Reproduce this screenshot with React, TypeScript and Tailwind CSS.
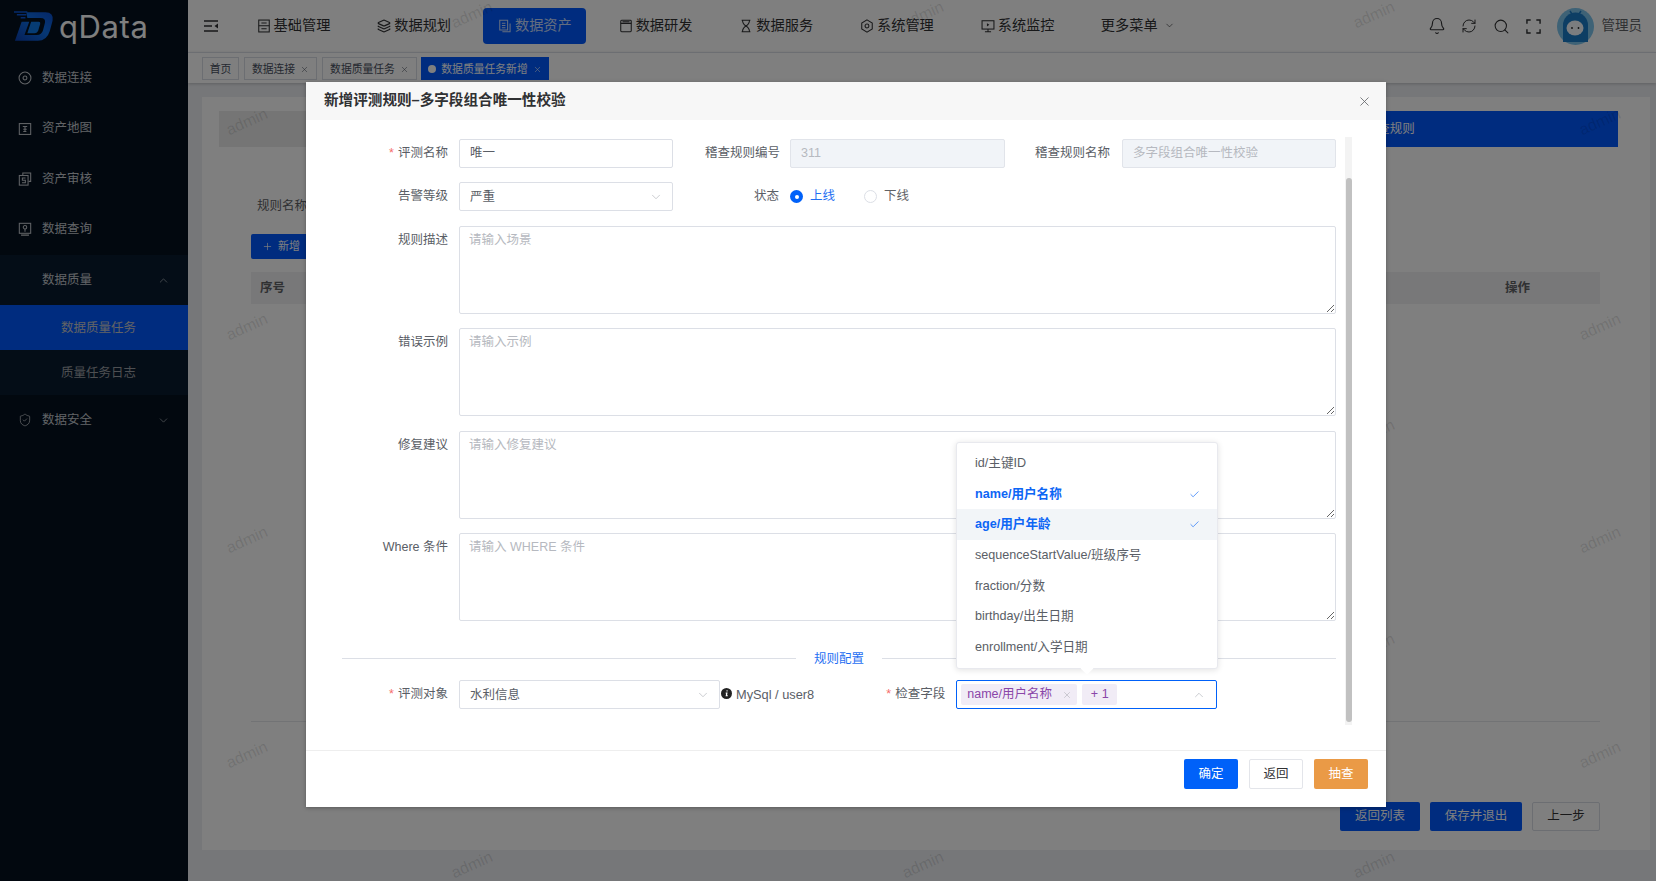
import React from "react";
import { X, ChevronDown, ChevronUp, Check, Plus, Layers, Bell, RefreshCw, Search, ShieldCheck } from "lucide-react";

const FONT = "font-['Liberation_Sans','Noto_Sans_CJK_SC',sans-serif]";

function Ic({ children, className = "" }: { children: React.ReactNode; className?: string }) {
  return (
    <svg viewBox="0 0 16 16" fill="none" stroke="currentColor" strokeWidth="1.2" className={className}>
      {children}
    </svg>
  );
}

const sideIcons: Record<string, React.ReactNode> = {
  conn: (<Ic className="w-[14px] h-[14px]"><circle cx="8" cy="8" r="6.8" /><circle cx="8" cy="8" r="2.2" /></Ic>),
  map: (<Ic className="w-[14px] h-[14px]"><rect x="1.5" y="1.8" width="13" height="12.4" /><path d="M5.5 5.2h5M8 5v6M6 8.2h4M6 10.8h3.6" /></Ic>),
  audit: (<Ic className="w-[14px] h-[14px]"><path d="M5.5 3.5V1.2h9v9.5h-2.5" /><rect x="1.5" y="4" width="10" height="11" /><path d="M8.6 6.8H5v2.6h3.4v2.8H4.6" /></Ic>),
  query: (<Ic className="w-[14px] h-[14px]"><rect x="1.5" y="1.5" width="13" height="11.4" /><circle cx="8" cy="6" r="2" /><path d="M8 8v3M3.5 15h9" /></Ic>),
};

const navIcons: React.ReactNode[] = [
  <Ic className="w-[14px] h-[14px]" key="a"><rect x="2" y="1.2" width="12" height="13.6" /><path d="M2 7.8h12M5 4.5h6M5 11.2h6" /></Ic>,
  <Layers className="w-[14px] h-[14px]" strokeWidth={2} key="b" />,
  <Ic className="w-[14px] h-[14px]" key="c"><path d="M2 1.5h9v11H2zM13.8 5v9.5H5" /><path d="M4.5 4.8h4M4.5 7.5h4M4.5 10h4" /></Ic>,
  <Ic className="w-[14px] h-[14px]" key="d"><rect x="2" y="1.5" width="12" height="13" rx="1" /><path d="M2 5h12M4 3.2h8" /></Ic>,
  <Ic className="w-[14px] h-[14px]" key="e"><path d="M3 1.5h10M3 14.5h10M4 1.5c0 3.5 1.5 5 4 6.5 2.5-1.5 4-3 4-6.5M4 14.5c0-3.5 1.5-5 4-6.5 2.5 1.5 4 3 4 6.5" /></Ic>,
  <Ic className="w-[14px] h-[14px]" key="f"><path d="M8 1l6 3.5v7L8 15l-6-3.5v-7z" /><circle cx="8" cy="8" r="2.2" /></Ic>,
  <Ic className="w-[14px] h-[14px]" key="g"><rect x="1.2" y="2" width="13.6" height="9.5" /><path d="M8 11.5v3M4.5 14.5h7" /><path d="M6.8 4.8l2.8 1.9-2.8 1.9z" fill="currentColor" stroke="none" /></Ic>,
];

const navItems = ["基础管理", "数据规划", "数据资产", "数据研发", "数据服务", "系统管理", "系统监控"];

const marks: [number, number][] = [
  [472, 15], [923, 15], [1374, 15],
  [247, 122], [1600, 122],
  [247, 327], [1600, 327], [1374, 433],
  [247, 540], [1600, 540], [1374, 647],
  [247, 755], [1600, 755],
  [472, 865], [923, 865], [1374, 865],
];

function SideItem({ icon, label, chevron, className = "" }: { icon?: string; label: string; chevron?: "up" | "down"; className?: string }) {
  return (
    <div className={`relative flex h-[50.4px] items-center pl-[18px] text-[12.5px] text-[#c3c7cc] ${className}`}>
      <span className="flex w-[24px] shrink-0">{icon ? sideIcons[icon] : null}</span>
      <span>{label}</span>
      {chevron === "up" && <ChevronUp className="absolute right-[18px] w-[13px] h-[13px]" strokeWidth={1.2} />}
      {chevron === "down" && <ChevronDown className="absolute right-[18px] w-[13px] h-[13px]" strokeWidth={1.2} />}
    </div>
  );
}

function Tag({ label, closable, active, width }: { label: string; closable?: boolean; active?: boolean; width: string }) {
  return (
    <div className={`flex h-[23px] items-center justify-center gap-[5px] border pt-[1px] text-[10.8px] ${width} ${active ? "-ml-[1px] border-[#0058fe] bg-[#0058fe] text-white" : "border-[#d8dce5] bg-white text-[#495060]"}`}>
      {active && <span className="h-[8px] w-[8px] rounded-full bg-white" />}
      <span>{label}</span>
      {closable && <X className="h-[9px] w-[9px]" strokeWidth={1.4} />}
    </div>
  );
}

function Label({ children, required, className = "" }: { children: React.ReactNode; required?: boolean; className?: string }) {
  return (
    <div className={`shrink-0 text-right text-[12.5px] leading-[29px] text-[#5a5e66] ${className}`}>
      {required && <span className="mr-[4px] text-[#f56c6c]">*</span>}
      {children}
    </div>
  );
}

function SelectBox({ value, className = "" }: { value: string; className?: string }) {
  return (
    <div className={`flex h-[29px] items-center justify-between rounded-[2px] border border-[#dcdfe6] bg-white pl-[10px] pr-[9px] text-[12.5px] text-[#5a5e66] ${className}`}>
      <span className="pt-[1px]">{value}</span>
      <ChevronDown className="h-[14px] w-[14px] text-[#b4b7bd]" strokeWidth={1.2} />
    </div>
  );
}

function AreaRow({ label, placeholder, className = "" }: { label: string; placeholder: string; className?: string }) {
  return (
    <div className={`flex ${className}`}>
      <Label className="w-[106px]">{label}</Label>
      <textarea
        placeholder={placeholder}
        readOnly
        className="ml-[11px] h-[88px] flex-1 rounded-[2px] border border-[#dcdfe6] bg-white px-[9px] py-[4px] text-[12.5px] leading-[18px] outline-none placeholder:text-[#b6b9c0]"
      />
    </div>
  );
}

const options = [
  { t: "id/主键ID" },
  { t: "name/用户名称", on: true },
  { t: "age/用户年龄", on: true, hover: true },
  { t: "sequenceStartValue/班级序号" },
  { t: "fraction/分数" },
  { t: "birthday/出生日期" },
  { t: "enrollment/入学日期" },
];

export default function App() {
  return (
    <div className={`relative flex h-screen w-full overflow-hidden ${FONT}`}>
      <aside className="w-[188px] shrink-0 bg-[#04101f]">
        <div className="flex h-[53px] items-center pl-[14px]">
          <svg viewBox="0 0 42 32" className="h-[31px] w-[40px]">
            <defs>
              <linearGradient id="lg" x1="0" y1="1" x2="1" y2="0">
                <stop offset="0" stopColor="#0b3fb0" />
                <stop offset="0.55" stopColor="#0d6fe8" />
                <stop offset="1" stopColor="#0b4fd0" />
              </linearGradient>
            </defs>
            <path d="M0 0h14v1.5H0zM3 3h10v1.5H3zM7 6h5v1.5H7z" fill="#0a55d8" />
            <path d="M13 1H33Q42 1 40.5 10L37.5 21Q34.5 31 25 31H1L8 11H16L11 25H24Q29 25 30.5 20L32.5 12Q33.5 7 28 7H14z" fill="url(#lg)" />
            <path d="M18 11H26Q28 11 27.5 13.5L25.5 20Q24.5 23 21.5 23H14z" fill="#0d78e8" />
          </svg>
          <span className="ml-[5px] font-['Inter',sans-serif] text-[31px] leading-none tracking-[0.6px] text-white">qData</span>
        </div>
        <SideItem icon="conn" label="数据连接" />
        <SideItem icon="map" label="资产地图" />
        <SideItem icon="audit" label="资产审核" />
        <SideItem icon="query" label="数据查询" />
        <div className="bg-[#081a2e]">
          <SideItem label="数据质量" chevron="up" className="pt-[1px]" />
          <div className="flex h-[45px] items-center bg-[#0058fe] pl-[61px] pt-[2px] text-[12.5px] text-[#c3c7cc]">数据质量任务</div>
          <div className="flex h-[45px] items-center pl-[61px] pt-[2px] text-[12.5px] text-[#9a9ea4]">质量任务日志</div>
        </div>
        <div className="relative flex h-[50.4px] items-center pl-[18px] text-[12.5px] text-[#c3c7cc]">
          <ShieldCheck className="mr-[10px] h-[14px] w-[14px]" strokeWidth={1.3} />
          <span>数据安全</span>
          <ChevronDown className="absolute right-[18px] h-[13px] w-[13px]" strokeWidth={1.2} />
        </div>
      </aside>

      <div className="flex min-w-0 flex-1 flex-col bg-[#eceef2]">
        <header className="flex h-[52px] shrink-0 items-center bg-white text-[#303133]">
          <svg viewBox="0 0 14 12" className="ml-[16px] h-[12px] w-[14px]" fill="none" stroke="currentColor" strokeWidth="1.3">
            <path d="M0 1h14M0 6h8M0 11h14" />
            <path d="M14 3.5L10.5 6 14 8.5z" fill="currentColor" stroke="none" />
          </svg>
          <nav className="ml-[24px] flex items-center gap-[17.7px]">
            {navItems.map((n, i) => (
              <div
                key={n}
                className={`flex h-[36px] w-[103px] items-center justify-center gap-[3px] rounded-[4px] text-[14.2px] ${i === 2 ? "bg-[#0058fe] text-[#ffffffcc]" : ""}`}
              >
                <span className="flex w-[14px] justify-center">{navIcons[i]}</span>
                <span>{n}</span>
              </div>
            ))}
            <div className="ml-[14px] flex items-center gap-[6px] text-[14.2px]">
              <span>更多菜单</span>
              <ChevronDown className="h-[11px] w-[11px]" strokeWidth={1.4} />
            </div>
          </nav>
          <div className="ml-auto flex items-center pr-[14px]">
            <Bell className="h-[18px] w-[18px]" strokeWidth={1.5} />
            <RefreshCw className="ml-[15px] h-[16px] w-[16px]" strokeWidth={1.5} />
            <Search className="ml-[16px] h-[17px] w-[17px]" strokeWidth={1.5} />
            <svg viewBox="0 0 16 16" className="ml-[16px] h-[15px] w-[15px]" fill="none" stroke="currentColor" strokeWidth="1.5">
              <path d="M1 5V1h4M11 1h4v4M15 11v4h-4M5 15H1v-4" />
            </svg>
            <svg viewBox="0 0 37 37" className="ml-[16px] h-[37px] w-[37px]">
              <circle cx="18.5" cy="18.5" r="18.5" fill="#7cc4ec" />
              <path d="M6 34V17a12.5 12.5 0 0 1 25 0v17z" fill="#1b7cc8" />
              <ellipse cx="18" cy="20" rx="8.5" ry="7.5" fill="#f7fbff" />
              <circle cx="15" cy="20" r="0.9" fill="#222" />
              <circle cx="21.5" cy="20" r="0.9" fill="#222" />
              <path d="M13 3l2 3M24 3l-2 3" stroke="#1b7cc8" strokeWidth="1.5" />
            </svg>
            <span className="ml-[8px] text-[13.5px] text-[#606266]">管理员</span>
          </div>
        </header>

        <div className="flex h-[31px] shrink-0 items-center gap-[5px] border-t border-[#d8dce5] bg-white pl-[14px] pt-[1px] shadow-[0_1px_3px_rgba(0,0,0,0.2)]">
          <Tag label="首页" width="w-[37px]" />
          <Tag label="数据连接" closable width="w-[73px]" />
          <Tag label="数据质量任务" closable width="w-[95px]" />
          <Tag label="数据质量任务新增" closable active width="w-[128px]" />
        </div>

        <main className="flex min-h-0 flex-1 pb-[31px] pl-[14px] pr-[6px] pt-[14px]">
          <section className="flex flex-1 flex-col bg-white px-[17px] pt-[14px]">
            <div className="mr-[15px] flex h-[36px] shrink-0 text-[12.5px] text-white">
              <div className="flex-1 bg-[#ebebeb]" />
              <div className="flex-1 bg-[#0058fe]" />
              <div className="flex flex-1 items-center justify-center bg-[#0058fe]">
                <span className="ml-[10px]">稽查规则</span>
              </div>
            </div>
            <div className="ml-[32px] mr-[33px] flex flex-1 flex-col">
              <div className="ml-[6px] mt-[51px] text-[12.5px] leading-[16px] text-[#606266]">规则名称</div>
              <div className="mt-[20px] flex h-[25px] w-[90px] items-center gap-[5px] rounded-[2px] bg-[#0058fe] pl-[11px] text-[11px] text-white">
                <Plus className="h-[11px] w-[11px]" strokeWidth={1.5} />
                新增
              </div>
              <div className="mt-[13px] flex h-[32px] items-center justify-between bg-[#f0f0f2] text-[12.5px] font-bold text-[#606266]">
                <span className="ml-[9px]">序号</span>
                <span className="mr-[70px]">操作</span>
              </div>
              <div className="mt-[417px] h-px bg-[#e4e6ea]" />
              <div className="mt-[80px] flex justify-end gap-[10px] text-[12.5px]">
                <div className="flex h-[29px] w-[80px] items-center justify-center rounded-[2px] bg-[#0058fe] text-white">返回列表</div>
                <div className="flex h-[29px] w-[92px] items-center justify-center rounded-[2px] bg-[#0058fe] text-white">保存并退出</div>
                <div className="flex h-[29px] w-[68px] items-center justify-center rounded-[2px] border border-[#d8dce5] text-[#303133]">上一步</div>
              </div>
            </div>
          </section>
        </main>
      </div>

      {marks.map(([x, y]) => (
        <span
          key={`${x}-${y}`}
          className="pointer-events-none absolute -translate-x-1/2 -translate-y-1/2 -rotate-[24deg] text-[16px] text-[#0000001f]"
          style={{ left: x, top: y }}
        >
          admin
        </span>
      ))}

      <div className="absolute inset-0 bg-black/50" />

      <div className="absolute left-[306px] top-[82px] flex h-[725px] w-[1080px] flex-col bg-white shadow-[0_1px_4px_rgba(0,0,0,0.3)]">
        <div className="flex h-[38px] shrink-0 items-center justify-between bg-[#f7f7f7] pl-[18px] pr-[14px]">
          <span className="text-[14.6px] font-bold text-[#303133]">新增评测规则–多字段组合唯一性校验</span>
          <X className="h-[15px] w-[15px] text-[#606266]" strokeWidth={1.3} />
        </div>

        <div className="relative flex-1 pl-[36px] pr-[50px] pt-[19px]">
          <div className="absolute bottom-[25px] right-[34px] top-[17px] w-[7px] bg-[#f3f3f3]" />
          <div className="absolute bottom-[28px] right-[34px] top-[58px] w-[6px] rounded-[3px] bg-[#c1c1c1]" />

          <div className="flex h-[29px]">
            <Label required className="w-[106px]">评测名称</Label>
            <div className="ml-[11px] flex h-[29px] w-[214px] items-center rounded-[2px] border border-[#dcdfe6] pl-[10px] text-[12.5px] text-[#5a5e66]">唯一</div>
            <Label className="w-[107px]">稽查规则编号</Label>
            <div className="ml-[10px] flex h-[29px] w-[215px] items-center rounded-[2px] border border-[#e1e4ea] bg-[#f1f4f8] pl-[10px] text-[12.5px] text-[#b6b9c0]">311</div>
            <Label className="w-[105px]">稽查规则名称</Label>
            <div className="ml-[12px] flex h-[29px] flex-1 items-center rounded-[2px] border border-[#e1e4ea] bg-[#f1f4f8] pl-[10px] text-[12.5px] text-[#b6b9c0]">多字段组合唯一性校验</div>
          </div>

          <div className="mt-[14px] flex h-[29px]">
            <Label className="w-[106px]">告警等级</Label>
            <SelectBox value="严重" className="ml-[11px] w-[214px]" />
            <Label className="w-[106px]">状态</Label>
            <div className="ml-[11px] flex items-center text-[12.5px]">
              <span className="flex h-[13px] w-[13px] items-center justify-center rounded-full bg-[#0061f9]">
                <span className="h-[4px] w-[4px] rounded-full bg-white" />
              </span>
              <span className="ml-[7px] text-[#1f6ff2]">上线</span>
              <span className="ml-[29px] h-[13px] w-[13px] rounded-full border border-[#dcdfe6]" />
              <span className="ml-[7px] text-[#606266]">下线</span>
            </div>
          </div>

          <AreaRow className="mt-[15px]" label="规则描述" placeholder="请输入场景" />
          <AreaRow className="mt-[14px]" label="错误示例" placeholder="请输入示例" />
          <AreaRow className="mt-[15px]" label="修复建议" placeholder="请输入修复建议" />
          <AreaRow className="mt-[14px]" label="Where 条件" placeholder="请输入 WHERE 条件" />

          <div className="mt-[30px] flex h-[14px] items-center">
            <div className="h-px w-[454px] bg-[#dcdfe6]" />
            <span className="ml-[18px] w-[50px] pt-[2px] text-[12.5px] text-[#1f6ff2]">规则配置</span>
            <div className="ml-[18px] h-px flex-1 bg-[#dcdfe6]" />
          </div>

          <div className="mt-[15px] flex h-[29px]">
            <Label required className="w-[106px]">评测对象</Label>
            <SelectBox value="水利信息" className="ml-[11px] w-[261px]" />
            <div className="ml-[1px] flex items-center text-[12.8px] text-[#5a5e66]">
              <svg viewBox="0 0 12 12" className="mb-[3px] h-[11px] w-[11px]">
                <circle cx="6" cy="6" r="6" fill="#222" />
                <path d="M6 2.5h1.2v1.3H6zM5.2 5h2l-.6 3h.8v1H5l.6-3h-.6z" fill="#fff" />
              </svg>
              <span className="ml-[4px]">MySql / user8</span>
            </div>
            <Label required className="ml-[71px] w-[60px]">检查字段</Label>
            <div className="ml-[11px] flex h-[29px] w-[261px] items-center rounded-[2px] border border-[#0061f9] pl-[4px] pr-[10px]">
              <div className="flex h-[21px] w-[116px] items-center justify-between rounded-[2px] bg-[#f1ecf6] pl-[6px] pr-[5px] text-[12.5px] text-[#8a46a8]">
                <span>name/用户名称</span>
                <X className="h-[10px] w-[10px] text-[#a9a9b0]" strokeWidth={1.3} />
              </div>
              <div className="ml-[5px] flex h-[21px] w-[35px] items-center justify-center rounded-[2px] bg-[#f1ecf6] text-[12.5px] text-[#8a46a8]">+ 1</div>
              <ChevronUp className="ml-auto h-[14px] w-[14px] text-[#b4b7bd]" strokeWidth={1.2} />
            </div>
          </div>

          <div className="absolute left-[650px] top-[322px] h-[227px] w-[262px] rounded-[3px] border border-[#e8e9ee] bg-white pt-[5px] shadow-[0_1px_6px_rgba(0,0,0,0.12)]">
            {options.map((o) => (
              <div
                key={o.t}
                className={`flex h-[30.7px] items-center justify-between pl-[18px] pr-[17px] text-[12.6px] ${o.on ? "font-bold text-[#0d66f5]" : "text-[#5a5e66]"} ${o.hover ? "bg-[#f2f5f8]" : ""}`}
              >
                <span>{o.t}</span>
                {o.on && <Check className="h-[11px] w-[11px]" strokeWidth={1.4} />}
              </div>
            ))}
            <div className="absolute -bottom-[5px] left-1/2 h-[9px] w-[9px] -translate-x-1/2 rotate-45 bg-white" />
          </div>
        </div>

        <div className="flex h-[57px] shrink-0 items-start justify-end gap-[11px] border-t border-[#eeeeee] pr-[18px] pt-[8px] text-[12.5px]">
          <div className="flex h-[30px] w-[54px] items-center justify-center rounded-[2px] bg-[#0061f9] text-white">确定</div>
          <div className="flex h-[30px] w-[54px] items-center justify-center rounded-[2px] border border-[#e3e5ea] text-[#303133]">返回</div>
          <div className="flex h-[30px] w-[54px] items-center justify-center rounded-[2px] bg-[#ea9a46] text-white">抽查</div>
        </div>
      </div>
    </div>
  );
}
